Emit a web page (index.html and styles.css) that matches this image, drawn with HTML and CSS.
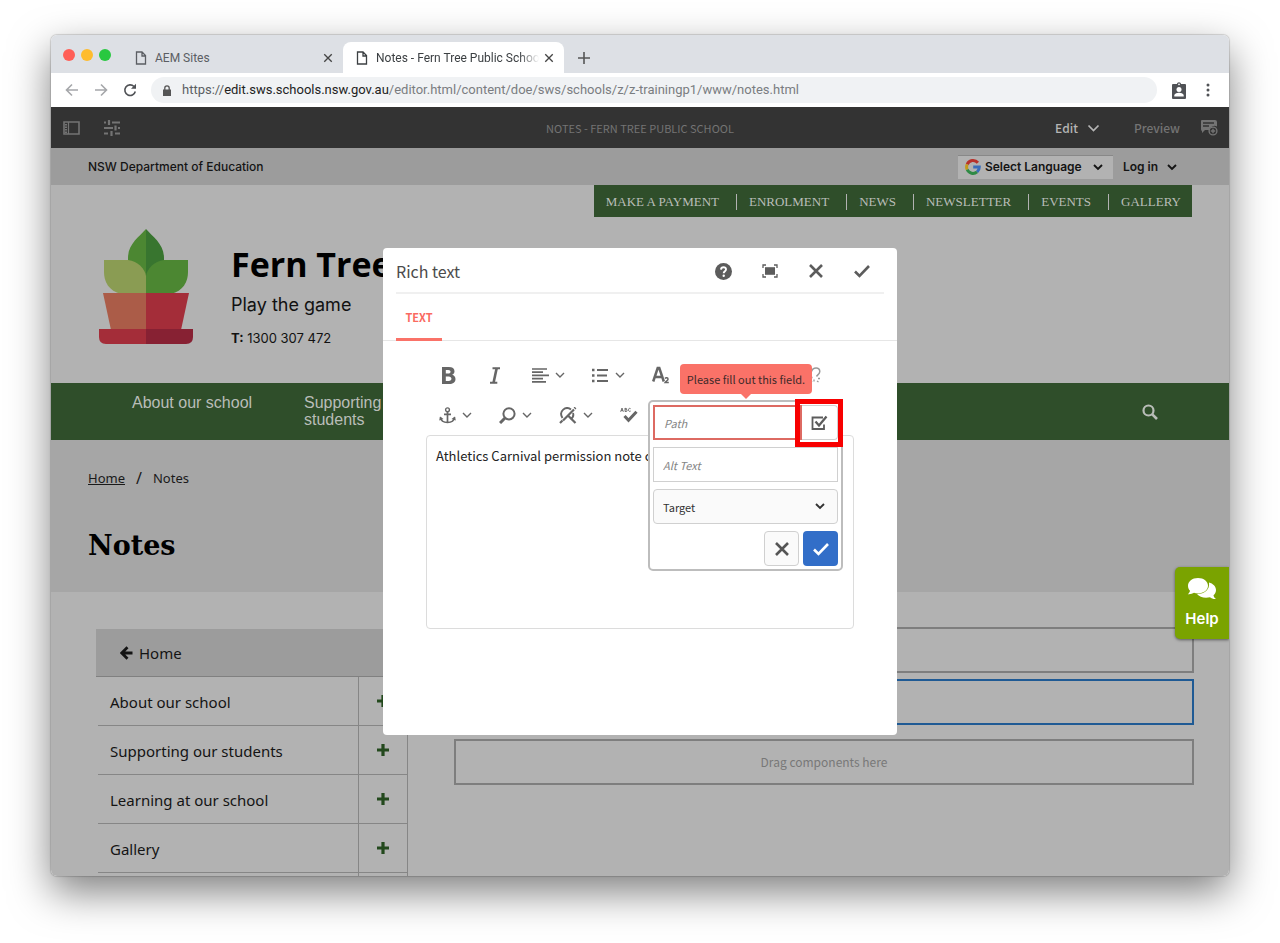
FILE: index.html
```html
<!DOCTYPE html>
<html lang="en">
<head>
<meta charset="utf-8">
<title>Notes - Fern Tree Public School</title>
<link rel="stylesheet" href="styles.css">
</head>
<body>
<svg class="defs" aria-hidden="true">
  <symbol id="chev" viewBox="0 0 12 8"><path d="M2 2l4 4 4-4" fill="none" stroke="currentColor" stroke-width="1.4"/></symbol>
  <symbol id="chevb" viewBox="0 0 12 8"><path d="M2 2l4 4 4-4" fill="none" stroke="currentColor" stroke-width="1.9"/></symbol>
  <symbol id="file" viewBox="0 0 12 14"><path d="M1.5 1h5.5l3.5 3.5V13h-9zM7 1v4h3.500" fill="none" stroke="currentColor" stroke-width="1.3"/></symbol>
  <symbol id="x" viewBox="0 0 16 16"><path d="M2 2l12 12M14 2L2 14" fill="none" stroke="currentColor" stroke-width="2.600"/></symbol>
  <symbol id="xthin" viewBox="0 0 16 16"><path d="M2 2l12 12M14 2L2 14" fill="none" stroke="currentColor" stroke-width="2.200"/></symbol>
  <symbol id="tick" viewBox="0 0 16 16"><path d="M1 8.500l4.500 4.500L15 3" fill="none" stroke="currentColor" stroke-width="2.600"/></symbol>
  <symbol id="plus" viewBox="0 0 12 12"><path d="M6 0v12M0 6h12" fill="none" stroke="currentColor" stroke-width="3.200"/></symbol>
</svg>
<div class="desktop">
<div class="window">
  <div class="tabs">
    <div class="lights"><span class="light red"></span><span class="light amber"></span><span class="light green"></span></div>
    <div class="tab"><svg class="i-file"><use href="#file"/></svg><span class="tab-title">AEM Sites</span><button class="tab-close" aria-label="Close tab"><svg><use href="#xthin"/></svg></button></div>
    <div class="tab active"><svg class="i-file"><use href="#file"/></svg><span class="tab-title fade">Notes - Fern Tree Public School</span><button class="tab-close" aria-label="Close tab"><svg><use href="#xthin"/></svg></button></div>
    <button class="tab-new" aria-label="New tab"><svg width="12" height="12" viewBox="0 0 12 12"><path d="M6 0v12M0 6h12" stroke="currentColor" stroke-width="1.600"/></svg></button>
  </div>
  <div class="addressbar">
    <button class="nav-btn dim" aria-label="Back"><svg width="14" height="14" viewBox="0 0 14 14"><path d="M13 7H2M7 1.500L1.500 7 7 12.500"/></svg></button>
    <button class="nav-btn dim" aria-label="Forward"><svg width="14" height="14" viewBox="0 0 14 14"><path d="M1 7h11M7 1.500L12.500 7 7 12.500"/></svg></button>
    <button class="nav-btn" aria-label="Reload"><svg width="14" height="14" viewBox="0 0 14 14"><path d="M12.300 8.500A5.300 5.300 0 1 1 11 3.500"/><path d="M13 .8v5H8z" fill="currentColor" stroke="none"/></svg></button>
    <div class="url">
      <svg width="8" height="11" viewBox="0 0 8 11"><path d="M0 4.500h8V11H0z" fill="#555"/><path d="M1.800 5V3a2.200 2.200 0 0 1 4.400 0v2" fill="none" stroke="#555" stroke-width="1.300"/></svg>
      <span class="url-text"><span>https://</span><b>edit.sws.schools.nsw.gov.au</b>/editor.html/content/doe/sws/schools/z/z-trainingp1/www/notes.html</span>
    </div>
    <button class="nav-btn profile" aria-label="Profile"><svg width="14" height="17" viewBox="0 0 14 17"><path d="M1 2h3.800a2.300 2.300 0 0 1 4.400 0H13a1 1 0 0 1 1 1v13a1 1 0 0 1-1 1H1a1 1 0 0 1-1-1V3a1 1 0 0 1 1-1z" fill="#505256" stroke="none"/><circle cx="7" cy="2.300" r=".9" fill="#fff" stroke="none"/><circle cx="7" cy="7.500" r="2.500" fill="#fff" stroke="none"/><path d="M2.300 14.500v-1c0-2 3-2.800 4.700-2.800s4.700.8 4.700 2.800v1z" fill="#fff" stroke="none"/></svg></button>
    <button class="nav-btn more" aria-label="Menu"><svg width="4" height="14" viewBox="0 0 4 14"><g fill="#505256" stroke="none"><circle cx="2" cy="2" r="1.500"/><circle cx="2" cy="7" r="1.500"/><circle cx="2" cy="12" r="1.500"/></g></svg></button>
  </div>

  <div class="page">
    <div class="aem">
      <button class="aem-btn" aria-label="Side panel"><svg width="17" height="14" viewBox="0 0 17 14"><path d="M1 1h15v12H1z" fill="none" stroke="currentColor" stroke-width="1.600"/><path d="M5.500 1v12" stroke="currentColor" stroke-width="1.200"/><path d="M3 3v9" stroke="currentColor" stroke-width="2" stroke-dasharray="1.500 1"/></svg></button>
      <button class="aem-btn" aria-label="Page properties"><svg width="18" height="16" viewBox="0 0 18 16"><path d="M1 2.500h2M9 2.500h8M1 8h9M15 8h2M1 13.500h4M12 13.500h5" stroke="currentColor" stroke-width="1.800"/><path d="M6 0v5M12.500 5.500v5M8.500 11v5" stroke="currentColor" stroke-width="2.200"/></svg></button>
      <span class="aem-title">NOTES - FERN TREE PUBLIC SCHOOL</span>
      <div class="aem-right">
        <button class="aem-mode">Edit<svg class="chev lg"><use href="#chev"/></svg></button>
        <button class="aem-prev">Preview</button>
        <button class="aem-note" aria-label="Annotate"><svg width="18" height="17" viewBox="0 0 18 17"><path d="M2 1h13a2 2 0 0 1 2 2v4.500a4.500 4.500 0 0 0-7 3.500H5l-3 3V12a2 2 0 0 1-1-2V2a1 1 0 0 1 1-1z" fill="currentColor"/><path d="M3 4h11M3 7h6" stroke="#333" stroke-width="1.300"/><circle cx="13" cy="12" r="3.900" fill="#333" stroke="currentColor" stroke-width="1.400"/><path d="M13 9.800v4.400M10.800 12h4.400" stroke="currentColor" stroke-width="1.400"/></svg></button>
      </div>
    </div>
    <div class="govbar">
      <a class="gov" href="#">NSW Department of Education</a>
      <button class="lang"><svg width="16" height="16" viewBox="0 0 16 16"><g fill="none" stroke-width="3"><path d="M12.900 3.800A6.400 6.400 0 0 0 2.200 5.300" stroke="#b8322b"/><path d="M2.200 5.300a6.400 6.400 0 0 0 0 5.400" stroke="#c49a1c"/><path d="M2.200 10.700a6.400 6.400 0 0 0 9.900 2.200" stroke="#2f8a45"/><path d="M12.100 12.900A6.400 6.400 0 0 0 14.300 8H8.200" stroke="#3a6dba"/></g></svg><span>Select Language</span><svg class="chev"><use href="#chevb"/></svg></button>
      <button class="login">Log in<svg class="chev"><use href="#chevb"/></svg></button>
    </div>
    <header class="site-head">
      <ul class="quick">
        <li><a href="#">MAKE A PAYMENT</a></li><li><a href="#">ENROLMENT</a></li><li><a href="#">NEWS</a></li><li><a href="#">NEWSLETTER</a></li><li><a href="#">EVENTS</a></li><li><a href="#">GALLERY</a></li>
      </ul>
      <div class="brand">
        <svg width="94" height="117" viewBox="0 0 94 117">
          <path d="M47 1C40 9 29 16 29 30v20h18z" fill="#4c8732"/><path d="M47 1c7 8 18 15 18 29v20H47z" fill="#38752f"/>
          <path d="M5 32h24c10 1 17 9 18 16v18H22C10 63 5 54 5 44z" fill="#8a9c53"/>
          <path d="M89 32H65c-10 1-17 9-18 16v18h25c12-3 17-12 17-22z" fill="#4c8732"/>
          <path d="M4 65h43v37H12z" fill="#ab5c48"/><path d="M47 65h43l-8 37H47z" fill="#a42d39"/>
          <path d="M0 101h47v15H7q-7 0-7-7z" fill="#a42d39"/><path d="M47 101h47v8q0 7-7 7H47z" fill="#872133"/>
        </svg>
        <div class="brand-text">
          <div class="school">Fern Tree Public School</div>
          <div class="motto">Play the game</div>
          <div class="phone"><b>T:</b> 1300 307 472</div>
        </div>
      </div>
    </header>
    <nav class="mainnav">
      <a href="#">About our school</a><a href="#">Supporting our students</a>
      <button class="search" aria-label="Search"><svg width="16" height="16" viewBox="0 0 16 16"><circle cx="6.500" cy="6.500" r="5" fill="none" stroke="currentColor" stroke-width="2.200"/><path d="M10.300 10.300L15 15" stroke="currentColor" stroke-width="2.600"/></svg></button>
    </nav>
    <section class="hero">
      <div class="crumbs"><a href="#">Home</a><span class="slash">/</span><span>Notes</span></div>
      <h1>Notes</h1>
    </section>
    <div class="content">
      <nav class="side">
        <a class="side-home" href="#"><svg width="13" height="14" viewBox="0 0 13 14"><path d="M12.500 7H2.500M7.500 1.300L1.800 7l5.700 5.700" fill="none" stroke="currentColor" stroke-width="2.800"/></svg>Home</a>
        <div class="side-row"><a href="#">About our school</a><button aria-label="Expand About our school"><svg><use href="#plus"/></svg></button></div>
        <div class="side-row"><a href="#">Supporting our students</a><button aria-label="Expand Supporting our students"><svg><use href="#plus"/></svg></button></div>
        <div class="side-row"><a href="#">Learning at our school</a><button aria-label="Expand Learning at our school"><svg><use href="#plus"/></svg></button></div>
        <div class="side-row"><a href="#">Gallery</a><button aria-label="Expand Gallery"><svg><use href="#plus"/></svg></button></div>
        <div class="side-row"><a href="#"></a><button aria-label="Expand"></button></div>
      </nav>
      <main class="drops">
        <div class="drop"></div><div class="drop selected"></div><div class="drop last">Drag components here</div>
      </main>
    </div>

    <button class="help"><svg width="30" height="24" viewBox="0 0 30 24"><path d="M22 5.500c4 1 7 4 7 7.500 0 2-1 4-2.500 5.200.3 1.600 1.200 2.900 2.500 3.800-2.500.2-4.500-.6-6-1.800-5 1.300-10.500 0-13-3.200 7 .2 13-4 12-11.500z" fill="#fff"/><path d="M11 1c5.800 0 10 3.500 10 7.700s-4.200 7.700-10 7.700c-1.500 0-2.800-.2-4-.6C5.500 16.800 3 17.500.8 17.200 2 16.200 2.800 15 3 13.700 1.700 12.400 1 10.600 1 8.700 1 4.500 5.200 1 11 1z" fill="#fff"/></svg><span>Help</span></button>

    <div class="overlay">
      <div class="dialog" role="dialog" aria-label="Rich text">
        <div class="dlg-head">
          <span class="dlg-title">Rich text</span>
          <div class="dlg-actions">
            <button aria-label="Help"><svg width="17" height="17" viewBox="0 0 17 17"><circle cx="8.500" cy="8.500" r="8.500" fill="currentColor"/><path d="M6 6.600C6.200 3.400 11.200 3.600 11 6.500c-.1 1.700-2.300 1.800-2.300 3.800" fill="none" stroke="#fff" stroke-width="1.900"/><circle cx="8.700" cy="12.800" r="1.200" fill="#fff"/></svg></button>
            <button aria-label="Full screen"><svg width="16" height="14" viewBox="0 0 16 14"><path d="M3 3.200h10v7.600H3z" fill="currentColor"/><path d="M1 4V1h3M12 1h3v3M15 10v3h-3M4 13H1v-3" fill="none" stroke="currentColor" stroke-width="1.300"/></svg></button>
            <button aria-label="Cancel"><svg class="i16"><use href="#x"/></svg></button>
            <button aria-label="Done"><svg class="i16"><use href="#tick"/></svg></button>
          </div>
        </div>
        <div class="dlg-tabs"><button class="dlg-tab">TEXT</button></div>
        <div class="dlg-body">
          <div class="tools">
            <button class="t1" aria-label="Bold"><svg width="14" height="17" viewBox="0 0 14 17"><path fill-rule="evenodd" d="M0 0h6.800C10.500 0 12.500 1.600 12.500 4.200c0 1.800-1 3.100-2.400 3.600C12 8.300 13.500 9.700 13.500 12c0 3.200-2.500 5-6.200 5H0zM3.800 3v3.600h2.400c3.200 0 3.200-3.600 0-3.600zM3.800 9.500v4.400h2.800c4 0 3.700-4.400 0-4.400z" fill="currentColor"/></svg></button>
            <button class="t1" aria-label="Italic"><svg width="12" height="17" viewBox="0 0 12 17"><path d="M3.500 1.200H11M1 15.800h7.300" stroke="currentColor" stroke-width="2"/><path d="M7.700 1L4.500 16" stroke="currentColor" stroke-width="2.600"/></svg></button>
            <button class="t2" aria-label="Alignment"><svg width="18" height="15" viewBox="0 0 18 15"><path d="M1 1h15M1 4.200h11M1 7.400h17M1 10.600h11M1 13.800h14" stroke="currentColor" stroke-width="1.700"/></svg><svg class="chev"><use href="#chev"/></svg></button>
            <button class="t2" aria-label="Lists"><svg width="18" height="15" viewBox="0 0 18 15"><path d="M6 2h11M6 7.500h10M6 13h11" stroke="currentColor" stroke-width="2.200"/><path d="M1 2h2.500M1 7.500h2.500M1 13h2.500" stroke="currentColor" stroke-width="2.300"/></svg><svg class="chev"><use href="#chev"/></svg></button>
            <button class="t1" aria-label="Subscript"><svg width="18" height="18" viewBox="0 0 18 18"><path d="M1.200 15.500L5.700 2h1.600l4.500 13.500M3.300 11h6.500" fill="none" stroke="currentColor" stroke-width="2.500"/><path d="M13 12.500c1-1.200 3.200-.8 3 .8-.2 1.200-1.800 1.800-2.800 3.200h3.600" fill="none" stroke="currentColor" stroke-width="1.500"/></svg></button>
            <button class="unlink" aria-label="Unlink"><svg width="12" height="18" viewBox="0 0 12 18"><path d="M1.500 5.500C3 .5 10 1 9.800 5.500 9.700 8 7.500 8.800 6.500 10.500" fill="none" stroke="currentColor" stroke-width="1.500"/><path d="M1 11.500h1.500M4 13.500v2M8 12.500h2M7 15l1.500 1M2 15l-1 1.200" stroke="currentColor" stroke-width="1.300"/></svg></button>
          </div>
          <div class="tools">
            <button class="t2" aria-label="Anchor"><svg width="17" height="17" viewBox="0 0 17 17"><circle cx="8.500" cy="2.800" r="1.900" fill="none" stroke="currentColor" stroke-width="1.400"/><path d="M8.500 5v11M5 7.300h7M1.500 10.500c.5 3.500 3.500 5 7 5s6.500-1.500 7-5" fill="none" stroke="currentColor" stroke-width="1.700"/><path d="M.2 13.500l.8-4 3.500 2.500zM16.800 13.500l-.8-4-3.500 2.500z" fill="currentColor"/></svg><svg class="chev"><use href="#chev"/></svg></button>
            <button class="t2" aria-label="Find"><svg width="17" height="17" viewBox="0 0 17 17"><circle cx="10" cy="6.800" r="5.600" fill="none" stroke="currentColor" stroke-width="2"/><path d="M6 11l-5 5" stroke="currentColor" stroke-width="3"/></svg><svg class="chev"><use href="#chev"/></svg></button>
            <button class="t2" aria-label="Replace"><svg width="18" height="17" viewBox="0 0 18 17"><path d="M3.500 11C-1 4 7-1.500 12 2.500M14 6c.8 2.500-.5 5-2.500 6" fill="none" stroke="currentColor" stroke-width="1.900"/><path d="M4 13.500L15 2.500M3.500 13.500L1 16M9 8.500l7.500 7.500" stroke="currentColor" stroke-width="2.200"/><path d="M15.500 1.500l1-1" stroke="currentColor" stroke-width="2.500"/></svg><svg class="chev"><use href="#chev"/></svg></button>
            <button class="t1" aria-label="Spell check"><svg width="18" height="17" viewBox="0 0 18 17"><g fill="none" stroke="currentColor" stroke-width=".9"><path d="M.6 4.800L2 1l1.400 3.800M1 3.600h2M5 1v3.500h1.300c1.200 0 1.200-1.700 0-1.700H5M5 1.400h1.100c1 0 1 1.400 0 1.400M10.600 1.700C9.800.8 8.500 1.300 8.500 2.900s1.400 2 2.200 1.100"/></g><path d="M4.500 9l4 4.300 8-8.600" fill="none" stroke="currentColor" stroke-width="3"/></svg></button>
          </div>
          <div class="editor" contenteditable="true" spellcheck="false">Athletics Carnival permission note c</div>
        </div>

        <form class="popover" onsubmit="return false">
          <div class="path-row">
            <input class="path" type="text" placeholder="Path" aria-label="Path">
            <button class="browse" type="button" aria-label="Browse"><svg width="17" height="16" viewBox="0 0 17 16"><path d="M12 2.500H1.500V14h11.500V9.500" fill="none" stroke="currentColor" stroke-width="1.800"/><path d="M4.500 6.500l3.500 4L15.500 1.500" fill="none" stroke="currentColor" stroke-width="2.300"/></svg></button>
            <span class="highlight"></span>
            <span class="tip" role="tooltip">Please fill out this field.</span>
          </div>
          <input class="alt" type="text" placeholder="Alt Text" aria-label="Alt Text">
          <div class="target"><select aria-label="Target"><option>Target</option></select><svg class="chev"><use href="#chevb"/></svg></div>
          <div class="pop-actions"><button class="cancel" type="button" aria-label="Cancel"><svg class="i16"><use href="#x"/></svg></button><button class="ok" type="button" aria-label="Apply"><svg class="i16"><use href="#tick"/></svg></button></div>
        </form>
      </div>
    </div>
  </div>
</div>
</div>
</body>
</html>
```
FILE: styles.css
```css
* { box-sizing: border-box; }
body { margin: 0; background: #fff; font-family: "Noto Sans", sans-serif; color: #000; }
button { border: 0; background: none; padding: 0; margin: 0; font: inherit; color: inherit; display: flex; align-items: center; justify-content: center; }
a { color: inherit; text-decoration: none; }
svg { flex: none; display: block; }
.defs { position: absolute; width: 0; height: 0; }
.chev { width: 12px; height: 8px; }
.chev.lg { width: 15px; height: 10px; }
.i16 { width: 16px; height: 16px; }

.desktop { padding: 35px 51px 67px; }
.window { height: calc(100vh - 102px); display: flex; flex-direction: column; overflow: hidden; border-radius: 6px; box-shadow: 0 0 1px 1px rgba(0,0,0,.15), 0 16px 40px rgba(0,0,0,.5); }

.tabs { flex: none; height: 38px; display: flex; background: #dde0e5; padding-left: 12px; align-items: flex-end; font: 12px/16px Roboto, sans-serif; }
.lights { display: flex; gap: 6px; width: 59px; height: 38px; padding-top: 14px; }
.light { width: 12px; height: 12px; border-radius: 50%; }
.light.red { background: #ff5f57; }
.light.amber { background: #febc2e; }
.light.green { background: #28c840; }
.tab { width: 221px; height: 31px; display: flex; align-items: center; padding: 0 9px 0 13px; color: #5b5e63; }
.tab.active { background: #fff; border-radius: 8px 8px 0 0; color: #3c4043; }
.i-file { width: 12px; height: 14px; margin-right: 8px; }
.tab-title { flex: 1; min-width: 0; overflow: hidden; white-space: nowrap; }
.fade { -webkit-mask-image: linear-gradient(90deg, #000 88%, transparent); mask-image: linear-gradient(90deg, #000 88%, transparent); }
.tab-close { width: 12px; height: 16px; margin-left: 4px; color: #444; }
.tab-close svg { width: 10px; height: 10px; }
.tab-new { width: 40px; height: 31px; color: #555; }

.addressbar { flex: none; height: 34px; background: #fff; display: flex; align-items: center; padding: 0 14px; gap: 15px; }
.nav-btn { width: 14px; color: #505256; }
.nav-btn svg { fill: none; stroke: currentColor; stroke-width: 1.600; }
.nav-btn.dim { color: #a5a7aa; }
.url { flex: 1; min-width: 0; margin-left: -1px; height: 26px; border-radius: 13px; background: #f0f2f4; display: flex; align-items: center; gap: 11px; padding-left: 12px; overflow: hidden; }
.url-text { font: 13px/18px Roboto, sans-serif; color: #7a7d81; white-space: nowrap; }
.url-text span { color: #5b5e63; }
.url-text b { font-weight: 400; color: #222; }

.page { flex: 1; min-height: 0; position: relative; background: #b2b2b2; overflow: hidden; }
.aem { height: 41px; background: #333; color: #747474; display: flex; align-items: center; padding: 0 11px; gap: 23px; font-family: "Noto Sans CJK SC", "Noto Sans", sans-serif; }
.aem-btn { width: 18px; }
.aem-title { flex: 1; text-align: center; font-size: 11px; line-height: 16px; padding-left: 104px; }
.aem-right { display: flex; align-items: center; font-size: 12px; line-height: 16px; font-weight: 500; }
.aem-mode { color: #b5b5b5; gap: 8px; margin-right: 33px; }
.aem-note { margin-left: 20px; }
.govbar { height: 37px; background: #9c9c9c; display: flex; align-items: center; padding: 0 51px 0 37px; font: 600 12px/16px Inter, sans-serif; color: #141414; }
.gov { flex: 1; font-weight: 500; }
.lang { height: 24px; background: #b2b2b2; border-top: 1px solid #888; width: 155px; gap: 4px; padding: 0 9px 0 7px; }
.lang span { flex: 1; text-align: left; }
.login { margin-left: 10px; gap: 8px; }

.site-head { height: 198px; padding: 0 37px; display: flex; flex-direction: column; }
.quick { align-self: flex-end; margin: 0; padding: 9px 0 0; height: 32px; display: flex; list-style: none; background: #2f4e2a; color: #b9bdb8; font: 13px/16px "Liberation Serif", serif; }
.quick li { padding: 0 17px 0 12px; height: 16px; }
.quick li + li { border-left: 1px solid #b2b2b2; }
.quick li:last-child { padding-right: 11px; }
.brand { display: flex; gap: 38px; padding: 11px 0 0 11px; white-space: nowrap; }
.brand-text { padding-top: 12px; }
.school { font: 700 34px/48px "Open Sans", sans-serif; }
.motto { font: 18px/24px Inter, sans-serif; margin-top: 5px; color: #111; }
.phone { font: 13px/18px Inter, sans-serif; margin-top: 12px; color: #111; }

.mainnav { height: 57px; background: #2f4e2a; color: #b9bdb8; display: flex; align-items: flex-start; padding: 11px 71px 0 81px; font: 16px/17px "Liberation Sans", Arial, sans-serif; }
.mainnav a { width: 124px; margin-right: 48px; }
.search { margin-left: auto; height: 36px; }
.hero { height: 152px; background: #a6a6a6; padding: 28px 37px 0; color: #1a1a1a; }
.crumbs { display: flex; align-items: center; font-size: 13px; line-height: 20px; }
.crumbs a { text-decoration: underline; }
.slash { padding: 0 11px; font-size: 16px; }
h1 { margin: 38px 0 0; font: 700 27px/40px "DejaVu Serif", serif; color: #000; }

.content { display: flex; align-items: flex-start; gap: 46px; padding: 35px 35px 0 45px; }
.side { flex: none; width: 312px; margin-top: 2px; font-size: 15px; line-height: 20px; color: #141414; }
.side-home { height: 48px; background: #9c9c9c; display: flex; align-items: center; gap: 6px; padding-left: 24px; border-bottom: 1px solid #808080; }
.side-row { height: 49px; display: flex; margin-left: 2px; border-right: 1px solid #868686; border-bottom: 1px solid #868686; }
.side-row a { flex: 1; padding: 15px 0 0 12px; }
.side-row button { width: 49px; border-left: 1px solid #868686; color: #23491d; }
.side-row svg { width: 12px; height: 12px; }
.drops { flex: 1; display: flex; flex-direction: column; gap: 6px; font: 12px/16px "Noto Sans CJK SC", sans-serif; color: #787878; }
.drop { height: 46px; border: 2px solid #7e7e7e; display: flex; align-items: center; justify-content: center; }
.drop.selected { border-color: #1f5a94; }
.drop.last { margin-top: 8px; }

.help { position: absolute; right: 0; top: 460px; width: 54px; height: 72px; flex-direction: column; gap: 8px; background: #7aa300; border-radius: 5px 0 0 5px; color: #fff; font: 600 15px/20px Inter, sans-serif; box-shadow: 0 1px 3px rgba(0,0,0,.5); }

.overlay { position: absolute; inset: 0; display: flex; align-items: center; justify-content: center; pointer-events: none; }
.dialog { position: relative; width: 514px; min-height: 487px; background: #fff; border-radius: 4px; pointer-events: auto; color: #666; font-family: "Noto Sans CJK SC", "Noto Sans", sans-serif; }
.dlg-head { height: 46px; margin: 0 13px; padding-top: 2px; border-bottom: 2px solid #f0f0f0; display: flex; align-items: center; justify-content: space-between; }
.dlg-title { font-size: 16px; line-height: 24px; color: #4b4b4b; }
.dlg-actions { display: flex; align-items: center; gap: 30px; padding-right: 14px; color: #5c5c5c; }
.dlg-tabs { height: 47px; border-bottom: 1px solid #e6e6e6; padding: 0 13px; display: flex; }
.dlg-tab { width: 46px; height: 47px; border-bottom: 3px solid #fa7268; color: #fa6a61; font-size: 11px; line-height: 16px; font-weight: 700; padding-top: 2px; }
.dlg-body { padding: 14px 43px 0; }
.tools { height: 40px; display: flex; align-items: center; }
.t1 { width: 46px; height: 36px; }
.t2 { width: 60px; height: 36px; gap: 5px; }
.unlink { margin: 0 32px 0 auto; color: #999; }
.editor { height: 194px; border: 1px solid #dcdcdc; border-radius: 4px; padding: 10px 9px; font-size: 13px; line-height: 20px; color: #222; overflow: hidden; white-space: nowrap; }

.popover { position: absolute; left: 265px; top: 152px; width: 195px; padding: 3px; display: flex; flex-direction: column; gap: 7px; background: #fff; border: 2px solid #bdbdbd; border-radius: 5px; }
.popover input, .popover select { font: 11px/16px "Noto Sans CJK SC", "Noto Sans", sans-serif; height: 35px; min-width: 0; width: 100%; border: 1px solid #d0d0d0; background: #fff; padding: 0 9px; color: #333; border-radius: 0; appearance: none; outline: 0; }
.popover input::placeholder { color: #858585; font-style: italic; opacity: 1; }
.path-row { position: relative; display: flex; }
.popover .path { flex: 1; border: 2px solid #dd6a62; }
.browse { width: 36px; height: 35px; border: 1px solid #d0d0d0; border-left: 0; border-radius: 0 4px 4px 0; color: #5c5c5c; }
.highlight { position: absolute; right: -5px; top: -6px; width: 48px; height: 48px; border: 5px solid #f80000; }
.tip { position: absolute; left: 27px; bottom: 46px; width: 132px; height: 30px; display: flex; align-items: center; justify-content: center; background: #fa7268; border-radius: 4px; color: #3f2a2a; font-size: 11px; line-height: 16px; white-space: nowrap; }
.tip::after { content: ""; position: absolute; left: 61px; top: 30px; border: 5px solid transparent; border-top-color: #fa7268; border-bottom: 0; }
.target { position: relative; }
.popover .target select { display: block; background: #fafafa; border-radius: 4px; }
.target .chev { position: absolute; right: 12px; top: 13px; color: #333; }
.pop-actions { display: flex; justify-content: flex-end; gap: 4px; }
.pop-actions button { width: 35px; height: 35px; border-radius: 4px; }
.cancel { border: 1px solid #d0d0d0; background: #fafafa; color: #555; }
.ok { background: #326ec8; color: #fff; }
```
